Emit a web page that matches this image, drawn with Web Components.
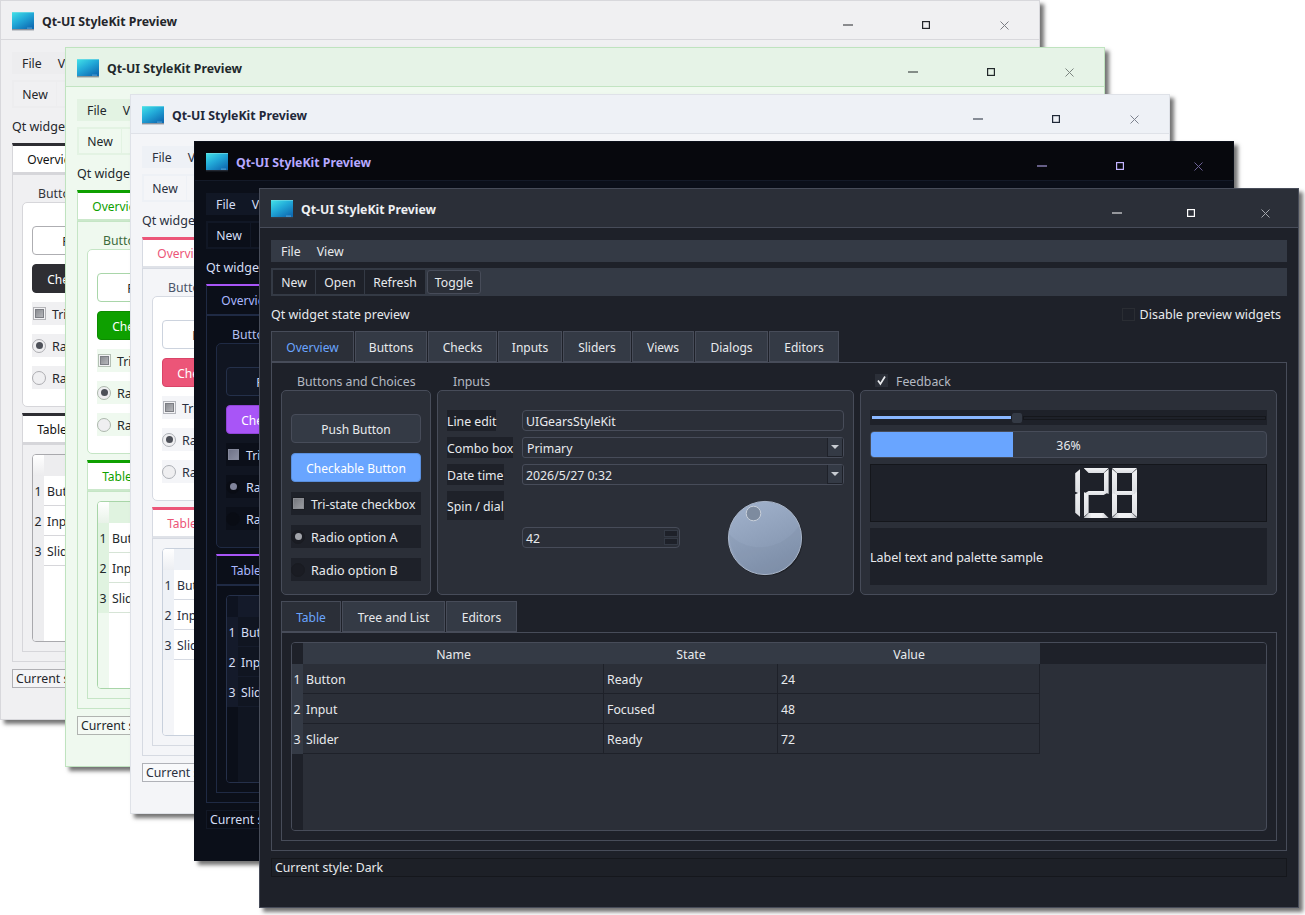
<!DOCTYPE html>
<html lang="en">
<head>
<meta charset="utf-8">
<title>Qt-UI StyleKit Preview</title>
<style>
  html, body { margin: 0; background: #fff; }
  body { font: 12.3px "Noto Sans", "Open Sans", sans-serif; overflow: hidden; }
</style>
</head>
<body>
<qt-desktop>
  <qt-window theme="light" style-name="Light" style="left:0;top:0"></qt-window>
  <qt-window theme="green" style-name="Green" style="left:65px;top:47px"></qt-window>
  <qt-window theme="rose" style-name="Rose" style="left:130px;top:94px"></qt-window>
  <qt-window theme="midnight" style-name="Midnight" style="left:194px;top:141px"></qt-window>
  <qt-window theme="dark" style-name="Dark" style="left:259px;top:188px"></qt-window>
</qt-desktop>

<script>
// small base class: css + markup go in an open shadow root
class QtWidget extends HTMLElement {
  constructor() {
    super();
    this.attachShadow({ mode: 'open' });
  }
  connectedCallback() {
    this.shadowRoot.innerHTML = `<style>:host,*{box-sizing:border-box} ${this.constructor.css}</style>${this.markup()}`;
  }
  markup() { return '<slot></slot>'; }
}

class QtDesktop extends QtWidget {
  static css = `:host{display:block;position:relative;width:1305px;height:915px;overflow:hidden}`;
}

class QtTitlebar extends QtWidget {
  static css = `
    :host{display:flex;align-items:center;flex:none;height:39px;background:var(--title);border-bottom:1px solid var(--title-line);padding:2px 0 0 11px}
    .logo{width:22px;height:20px;margin-right:8px;flex:none}
    .name{font-weight:700;font-size:12.3px;color:var(--title-text);flex:1;white-space:nowrap}
    .ctl{display:flex;gap:var(--ctl-gap);margin:7px var(--ctl-right) 0 0;align-self:flex-start}
    .ctl span{display:flex;width:70px;height:30px;align-items:center;justify-content:center}
    svg{display:block}`;
  markup() {
    const id = 'g' + Math.random().toString(36).slice(2, 7);
    return `
      <svg class="logo" viewBox="0 0 22 20">
        <defs><linearGradient id="${id}" x1="0" y1="0" x2="0.75" y2="1">
          <stop offset="0" stop-color="#43e3e8"/><stop offset=".5" stop-color="#22a9d8"/><stop offset="1" stop-color="#0f6db4"/>
        </linearGradient></defs>
        <rect x="0" y="1" width="22" height="17" fill="url(#${id})"/>
        <rect x="0" y="1" width="22" height="1" fill="#7fdfe6" opacity=".6"/>
        <rect x="0" y="18" width="22" height="1.4" fill="#3b4656" opacity=".55"/>
        <rect x="15" y="16.6" width="5" height="1" fill="#5aa6d8"/>
      </svg>
      <span class="name">Qt-UI StyleKit Preview</span>
      <span class="ctl">
        <span><svg width="10" height="2"><rect y=".5" width="10" height="1" fill="var(--ctl-icon)"/></svg></span>
        <span><svg width="8" height="8"><rect x=".6" y=".6" width="6.8" height="6.8" fill="none" stroke="var(--ctl-icon)" stroke-width="1.2"/></svg></span>
        <span><svg width="9" height="9"><path d="M.5 .5 8.5 8.5M8.5 .5 .5 8.5" fill="none" stroke="var(--ctl-close)" stroke-width="1"/></svg></span>
      </span>`;
  }
}

class QtMenubar extends QtWidget {
  static css = `
    :host{display:flex;flex:none;height:22px;align-items:center;background:var(--menu);padding-left:2px}
    ::slotted(span){padding:0 8px}`;
}

class QtToolbar extends QtWidget {
  static css = `:host{display:flex;flex:none;height:28px;margin-top:6px;gap:1px;padding:2px;background:var(--menu)}`;
}

class QtToolButton extends QtWidget {
  static css = `
    :host{display:flex;align-items:center;justify-content:center;background:var(--tool);font-size:12.2px;padding-top:1px}
    :host([checked]){background:var(--tool-on);border:1px solid var(--line);border-radius:3px;margin-left:1px}`;
}

class QtTabBar extends QtWidget {
  static css = `:host{display:flex;flex:none;height:31px;gap:1px}`;
}

class QtTab extends QtWidget {
  static css = `
    :host{display:flex;align-items:center;justify-content:center;background:var(--tab);border:1px solid var(--line);color:var(--text);font-size:12px;padding-top:1px}
    :host([selected]){background:var(--tab-sel);color:var(--tab-sel-text);border-top:var(--tab-top);border-bottom:var(--tab-bottom)}`;
}

class QtGroup extends QtWidget {
  static css = `
    :host{display:flex;flex-direction:column;min-width:0}
    .head{height:19px;flex:none;display:flex;align-items:center;padding:1px 0 0 16px;color:var(--muted);gap:8px}
    :host([checkable]) .head{padding-left:15px}
    .tick{width:13px;height:13px;background:var(--tick-bg);display:flex;align-items:center;justify-content:center;margin-top:-1px}
    .box{flex:1;background:var(--panel);border:1px solid var(--group-line);border-radius:5px;display:flex;flex-direction:column}`;
  markup() {
    const tick = this.hasAttribute('checkable')
      ? `<span class="tick"><svg width="11" height="11" viewBox="0 0 11 11"><path d="M2 5.5 4.4 9 9 1.5" fill="none" stroke="var(--text)" stroke-width="1.7"/></svg></span>` : '';
    return `<div class="head">${tick}<span>${this.getAttribute('label')}</span></div><div class="box"><slot></slot></div>`;
  }
}

class QtButton extends QtWidget {
  static css = `
    :host{display:flex;height:29px;align-items:center;justify-content:center;background:var(--btn);border:1px solid var(--btn-line);border-radius:4px;flex:none;font-size:12px;padding-top:1px}
    :host([checked]){background:var(--accent);border-color:var(--accent-line);color:var(--on-accent)}`;
}

class QtCheck extends QtWidget {
  static css = `
    :host{display:flex;height:23px;align-items:center;background:var(--label-bg);flex:none;padding-top:1px}
    .ind{width:13px;height:13px;border:1px solid var(--ind-line);background:var(--ind-bg);display:flex;align-items:center;justify-content:center;margin:-1px 6px 0 1px;flex:none}
    i{display:block;width:var(--tri-size);height:var(--tri-size);background:linear-gradient(135deg,var(--tri-a),var(--tri-b));border:1px solid var(--tri-c)}
    :host([plain]){background:none;height:auto;font-size:12.5px}
    :host([plain]) .ind{margin-right:5px;border-color:#2a2d33;background:none}`;
  markup() {
    return `<span class="ind">${this.hasAttribute('partial') ? '<i></i>' : ''}</span><slot></slot>`;
  }
}

class QtRadio extends QtWidget {
  static css = `
    :host{display:flex;height:23px;align-items:center;background:var(--label-bg);flex:none;font-size:12.6px;padding-top:1px}
    .ind{width:14px;height:14px;border-radius:50%;border:1px solid var(--radio-line);background:var(--radio-bg);display:flex;align-items:center;justify-content:center;margin:-1px 6px 0 0;flex:none}
    i{display:block;width:7px;height:7px;border-radius:50%;background:var(--radio-dot)}`;
  markup() {
    return `<span class="ind">${this.hasAttribute('checked') ? '<i></i>' : ''}</span><slot></slot>`;
  }
}

class QtLabel extends QtWidget {
  static css = `:host{display:flex;align-items:center;justify-self:start;align-self:start;height:21px;background:var(--label-bg);white-space:nowrap;padding-top:1px}
    :host([tall]){height:29px}`;
}

class QtField extends QtWidget {
  static css = `
    :host{display:flex;height:21px;align-items:center;border:1px solid var(--line);border-radius:4px;padding:1px 0 0 3px;white-space:nowrap;overflow:hidden}
    :host([kind=combo]){padding-left:4px;border-radius:3px}
    :host([kind=date]){border-radius:3px}
    .text{flex:1}
    .arrow{width:16px;height:19px;margin-top:-1px;background:var(--menu);border-left:1px solid var(--tool);border-bottom:1px solid var(--tool);border-right:1px solid var(--tool);display:flex;align-items:center;justify-content:center}
    .arrow b{border:4px solid transparent;border-top:4px solid var(--arrow);border-bottom:0;width:0;height:0}
    .spin{display:flex;flex-direction:column;gap:1px;margin:-1px 1px 0 0;width:14px}
    .spin b{display:block;height:7px;background:var(--tool);border:1px solid var(--menu)}`;
  markup() {
    const kind = this.getAttribute('kind');
    let tail = '';
    if (kind === 'combo' || kind === 'date') tail = `<span class="arrow"><b></b></span>`;
    if (kind === 'spin') tail = `<span class="spin"><b></b><b></b></span>`;
    return `<span class="text"><slot></slot></span>${tail}`;
  }
}

class QtDial extends QtWidget {
  static css = `:host{display:flex;align-items:center;justify-content:center} svg{display:block;overflow:visible}`;
  markup() {
    const id = 'd' + Math.random().toString(36).slice(2, 7);
    return `
      <svg width="76" height="76" viewBox="0 0 76 76">
        <defs>
          <linearGradient id="${id}" x1=".3" y1="0" x2=".7" y2="1">
            <stop offset="0" stop-color="var(--dial-a)"/><stop offset="1" stop-color="var(--dial-b)"/>
          </linearGradient>
        </defs>
        <circle cx="39" cy="39" r="37" fill="#000" opacity=".25"/>
        <circle cx="38" cy="38" r="36.6" fill="url(#${id})" stroke="var(--dial-edge)" stroke-width="1"/>
        <path d="M2 34C16 50 50 56 72 26 75 34 75 42 72 50 62 68 46 74 38 74 20 74 4 58 2 34Z" fill="#6c7c96" opacity=".12"/>
        <circle cx="26.5" cy="13.5" r="7.3" fill="var(--dial-notch)" stroke="var(--dial-ring)" stroke-width="1"/>
      </svg>`;
  }
}

class QtSlider extends QtWidget {
  static css = `
    :host{display:flex;height:15px;align-items:center;background:var(--label-bg);padding:0 1px 0 2px;flex:none}
    .fill{width:139px;height:3px;background:var(--slider-fill);flex:none}
    .knob{width:12px;height:12px;background:var(--menu);border:1px solid var(--tool);border-radius:3px;flex:none}
    .rest{flex:1;height:4px;background:var(--tool);border:1px solid #15171c}`;
  markup() { return `<span class="fill"></span><span class="knob"></span><span class="rest"></span>`; }
}

class QtProgress extends QtWidget {
  static css = `
    :host{display:block;position:relative;height:27px;background:var(--menu);border:1px solid var(--line);border-radius:4px;overflow:hidden;flex:none}
    .chunk{height:100%;width:36%;background:var(--accent)}
    .val{position:absolute;inset:1px 0 0;display:flex;align-items:center;justify-content:center}`;
  markup() { return `<div class="chunk"></div><div class="val"><slot></slot></div>`; }
}

// seven segment readout, like QLCDNumber. the value stays selectable text over the segments
class QtLcd extends QtWidget {
  static css = `
    :host{display:flex;height:58px;justify-content:flex-end;align-items:center;padding-right:129px;background:var(--label-bg);border:1px solid #14161b;flex:none}
    .readout{position:relative;display:flex;gap:3.4px}
    .digit{display:grid;width:25px;height:50px;grid-template-columns:5px 15px 5px;grid-template-rows:5px 18px 4px 18px 5px}
    .s{background:linear-gradient(180deg,#f1f2f4,#dcdee2)}
    .a{grid-area:1/1/2/4;clip-path:polygon(0 0,100% 0,80% 100%,20% 100%)}
    .d{grid-area:5/1/6/4;clip-path:polygon(20% 0,80% 0,100% 100%,0 100%);background:linear-gradient(90deg,#b9bcc2,#f1f2f4 30%,#f1f2f4 70%,#b9bcc2)}
    .g{grid-area:3/1/4/4;clip-path:polygon(6% 50%,20% 0,80% 0,94% 50%,80% 100%,20% 100%)}
    .f{grid-area:1/1/4/2;clip-path:polygon(0 4%,100% 19%,100% 88%,0 96%)}
    .b{grid-area:1/3/4/4;clip-path:polygon(0 19%,100% 4%,100% 96%,0 88%)}
    .e{grid-area:3/1/6/2;clip-path:polygon(0 4%,100% 12%,100% 81%,0 96%)}
    .c{grid-area:3/3/6/4;clip-path:polygon(0 12%,100% 4%,100% 96%,0 81%)}
    .val{position:absolute;inset:0;color:transparent;font-size:44px;line-height:50px;letter-spacing:3px;text-align:right}`;
  markup() {
    const map = { 0: 'abcdef', 1: 'bc', 2: 'abged', 3: 'abgcd', 4: 'fgbc', 5: 'afgcd', 6: 'afgcde', 7: 'abc', 8: 'abcdefg', 9: 'abcdfg' };
    const value = this.getAttribute('value');
    const digits = [...value].map(n =>
      `<div class="digit">${[...map[n]].map(s => `<span class="s ${s}"></span>`).join('')}</div>`).join('');
    return `<div class="readout">${digits}<span class="val">${value}</span></div>`;
  }
}

class QtTable extends QtWidget {
  static css = `
    :host{display:grid;flex:1;min-height:0;grid-template-columns:11px 301px 174px 262px 1fr;grid-template-rows:21px 30px 30px 30px 1fr;border:1px solid var(--table-line);border-radius:4px;background:var(--table);overflow:hidden}
    .corner{background:var(--corner)}
    .hd{background:var(--head);display:flex;align-items:center;justify-content:center;padding-top:1px}
    .hd-rest{background:var(--head-rest)}
    .num{background:var(--head);display:flex;align-items:center;justify-content:center;border-bottom:1px solid var(--head);padding:2px 1px 0 0}
    .cell{display:flex;align-items:center;padding:1px 0 0 3px;border-right:1px solid var(--grid);border-bottom:1px solid var(--grid)}
    .gutter{background:var(--gutter)}`;
  markup() {
    const rows = [['Button', 'Ready', '24'], ['Input', 'Focused', '48'], ['Slider', 'Ready', '72']];
    const body = rows.map((r, i) =>
      `<div class="num">${i + 1}</div>${r.map(c => `<div class="cell">${c}</div>`).join('')}<div></div>`).join('');
    return `<div class="corner"></div><div class="hd">Name</div><div class="hd">State</div><div class="hd">Value</div><div class="hd-rest"></div>
      ${body}<div class="gutter"></div>`;
  }
}

class QtWindow extends QtWidget {
  static css = `
    :host{position:absolute;display:flex;flex-direction:column;width:1040px;height:720px;background:var(--win);border:1px solid var(--win-line);color:var(--text);
      box-shadow:4px 4px 4px rgba(0,0,0,.55);font:12.3px "Noto Sans","Open Sans",sans-serif;white-space:nowrap;
      --ctl-gap:8px;--ctl-right:0px;--stack:9px;--foot:31px;--on-accent:#fff;--tab-bottom:1px solid var(--line);--tab-top:3px solid var(--accent);
      --tri-size:9px;--tri-a:#8b8d92;--tri-b:#b5b6ba;--tri-c:#7c7e84;--ind-bg:#f2f2f4;--radio-bg:#efeff1;--radio-dot:#4d5058;--arrow:#555;
      --dial-a:#dfe3ea;--dial-b:#b8bfcb;--dial-edge:#9aa3b0;--dial-notch:#aab2c0;--dial-ring:#eee;--slider-fill:var(--accent);--grid:var(--line);--tick-bg:none}
    :host([theme=dark]){--win:#1e2129;--win-line:#474c59;--title:#2b2f38;--title-line:#474c59;--title-text:#eef0f3;--ctl-icon:#fff;--ctl-close:#a4a7ad;--ctl-gap:4px;--ctl-right:-2px;
      --menu:#343a45;--tool:#1e2129;--tool-on:#2b2f38;--line:#474c59;--group-line:#474c59;--text:#e8eaed;--muted:#b4b9c2;--panel:#2b2f38;--label-bg:#1e2129;
      --accent:#69a5ff;--accent-line:#5a8fdd;--tab:#343a45;--tab-sel:#2b2f38;--tab-sel-text:#6aa5ff;--tab-top:1px solid #474c59;--btn:#343a45;--btn-line:#474c59;
      --stack:10px;--foot:30px;--tri-size:11px;--ind-line:#1a1c22;--ind-bg:#1e2129;--tri-a:#75777d;--tri-b:#9a9ca1;--tri-c:#8a8c92;--radio-line:#191b21;--radio-bg:#1a1c23;--radio-dot:#a2a4aa;--arrow:#c8ccd2;
      --dial-a:#9fb0ca;--dial-b:#7f90aa;--dial-edge:#a9b5c8;--dial-notch:#7d8b9f;--dial-ring:#c9d0da;--slider-fill:#8ab7ff;
      --table:#2b2f38;--table-line:#474c59;--head:#343a45;--head-rest:#1e2129;--corner:#1e2129;--gutter:#1e2129;--grid:#1e2129;--status:#1d2027;--status-line:#15171c;--tick-bg:#2b2f38}
    :host([theme=midnight]){--win:#0b0f19;--win-line:#0b0f19;--title:#07080d;--title-line:#141a28;--title-text:#b6a8ff;--ctl-icon:#c3b4ff;--ctl-close:#6d6296;
      --menu:#111725;--tool:#0b0f19;--tool-on:#111725;--line:#1f2a44;--group-line:#1f2a44;--text:#d5def5;--muted:#b5c0f0;--panel:#101521;--label-bg:#0b0f19;
      --accent:#a855f7;--accent-line:#8f44d8;--tab:#111725;--tab-sel:#0b0f19;--tab-sel-text:#aab8ff;--tab-top:2px solid #a855f7;--btn:#121826;--btn-line:#24304a;
      --tri-size:11px;--ind-line:#0b0f19;--ind-bg:#0b0f19;--tri-a:#6f7388;--tri-b:#8a8ea2;--tri-c:#85899c;--radio-line:#0a0d15;--radio-bg:#090c14;--radio-dot:#80849a;--arrow:#c8ccd2;
      --table:#101521;--table-line:#25304a;--head:#141a2a;--head-rest:#0b0f19;--corner:#0e1320;--gutter:#0b0f19;--grid:#151b2b;--status:#0a0d16;--status-line:#121826}
    :host([theme=light]){--win:#f0f0f2;--win-line:#d8d8dc;--title:#f0f0f2;--title-line:#d8d8dc;--title-text:#24262b;--ctl-icon:#24262b;--ctl-close:#7b7d83;
      --menu:#ededef;--tool:#f0f0f2;--tool-on:#fff;--line:#d6d6da;--group-line:#d6d6da;--text:#24262b;--muted:#33353a;--panel:#fff;--label-bg:#f0f0f2;
      --accent:#2e2e33;--accent-line:#2e2e33;--tab:#f0f0f2;--tab-sel:#fff;--tab-sel-text:#111;--btn:#fff;--btn-line:#aeaeb2;--tab-bottom:2px solid #d6d6da;
      --ind-line:#b4b4b8;--radio-line:#adadb1;
      --table:#fff;--table-line:#a9a9ad;--head:#ededef;--head-rest:#f0f0f2;--corner:linear-gradient(#fff,#ececee);--gutter:#ededef;--grid:#d6d6da;--status:#f4f4f6;--status-line:#b0b0b4}
    :host([theme=green]){--win:#eff9ef;--win-line:#bfe3bf;--title:#e6f3e7;--title-line:#c2e4c2;--title-text:#22282b;--ctl-icon:#22282b;--ctl-close:#7c8580;
      --menu:#e3f3e3;--tool:#eff9ef;--tool-on:#fff;--line:#c5e5c5;--group-line:#c5e5c5;--text:#22282b;--muted:#3d6b3d;--panel:#fff;--label-bg:#eff9ef;
      --accent:#0ea000;--accent-line:#0c8c00;--tab:#e3f3e3;--tab-sel:#fff;--tab-sel-text:#0ea000;--btn:#fff;--btn-line:#a9d6a9;--tab-bottom:2px solid #cbe8cb;
      --ind-line:#b4c0b4;--radio-line:#adb8ad;
      --table:#fff;--table-line:#a8d5a8;--head:#e0f3e0;--head-rest:#eff9ef;--corner:linear-gradient(#fff,#e8f2e8);--gutter:#eff9ef;--grid:#d6e4d6;--status:#f4faf4;--status-line:#b0b4b0}
    :host([theme=rose]){--win:#f4f5f8;--win-line:#dfe2e8;--title:#eef1f6;--title-line:#dfe2e8;--title-text:#22283a;--ctl-icon:#1f2937;--ctl-close:#7d828e;
      --menu:#eef1f6;--tool:#f4f5f8;--tool-on:#fff;--line:#d6dae2;--group-line:#d6dae2;--text:#2a3040;--muted:#4a5468;--panel:#fff;--label-bg:#f4f5f8;
      --accent:#ec5578;--accent-line:#d94468;--tab:#eef1f6;--tab-sel:#fff;--tab-sel-text:#ec5578;--btn:#fff;--btn-line:#ccd3de;--tab-bottom:2px solid #dfe2e8;
      --ind-line:#b4b6bc;--radio-line:#adb0b6;
      --table:#fff;--table-line:#c8d0dc;--head:#eef1f6;--head-rest:#f4f5f8;--corner:linear-gradient(#fff,#eceef2);--gutter:#f4f5f8;--grid:#d6dae2;--status:#f8f9fb;--status-line:#b0b2b8}
    .body{flex:1;min-height:0;display:flex;flex-direction:column;padding:12px 11px var(--foot) 11px}
    .intro{flex:none;height:35px;display:flex;align-items:center;justify-content:space-between;padding:1px 6px 0 0;font-size:12.5px}
    .tb-new{width:42px}.tb-open{width:48px}.tb-refresh{width:60px}.tb-toggle{width:54px}
    .pane{flex:1;min-height:0;display:flex;flex-direction:column;border:1px solid var(--line);padding:8px 9px 9px}
    .row{flex:none;display:grid;grid-template-columns:150px 417px 417px;gap:6px;height:224px}
    .stack{display:flex;flex-direction:column;gap:var(--stack);padding:23px 9px 0}
    .form{display:grid;grid-template-columns:69px 1fr;column-gap:6px;row-gap:6px;padding:19px 9px 0;grid-template-rows:21px 21px 21px 94px}
    .spin-row{display:grid;grid-template-columns:1fr 1fr;gap:6px;align-items:center}
    .spin-row qt-field{margin-top:-1px}
    .feed{display:flex;flex-direction:column;gap:6px;padding:19px 9px 0}
    .sample{display:flex;align-items:center;height:57px;background:var(--label-bg);font-size:12.5px;padding-top:1px}
    .w83{width:83px}.w72{width:72px}.w69{width:69px}.w64{width:64px}.w68{width:68px}.w62{width:62px}.w73{width:73px}.w70{width:70px}.w60{width:60px}.w103{width:103px}.w71{width:71px}
    .inner-tabs{margin-top:6px}
    .inner{flex:1;min-height:0;display:flex;flex-direction:column;border:1px solid var(--line);padding:9px}
    .status{flex:none;height:19px;margin-top:7px;display:flex;align-items:center;padding:0 0 1px 3px;background:var(--status);border:1px solid var(--status-line)}`;
  markup() {
    return `
      <qt-titlebar></qt-titlebar>
      <div class="body">
        <qt-menubar><span>File</span><span>View</span></qt-menubar>
        <qt-toolbar>
          <qt-toolbutton class="tb-new">New</qt-toolbutton><qt-toolbutton class="tb-open">Open</qt-toolbutton><qt-toolbutton class="tb-refresh">Refresh</qt-toolbutton><qt-toolbutton class="tb-toggle" checked>Toggle</qt-toolbutton>
        </qt-toolbar>
        <div class="intro"><span>Qt widget state preview</span><qt-check plain>Disable preview widgets</qt-check></div>
        <qt-tabbar>
          <qt-tab class="w83" selected>Overview</qt-tab><qt-tab class="w72">Buttons</qt-tab><qt-tab class="w69">Checks</qt-tab><qt-tab class="w64">Inputs</qt-tab><qt-tab class="w68">Sliders</qt-tab><qt-tab class="w62">Views</qt-tab><qt-tab class="w73">Dialogs</qt-tab><qt-tab class="w70">Editors</qt-tab>
        </qt-tabbar>
        <div class="pane">
          <div class="row">
            <qt-group label="Buttons and Choices">
              <div class="stack">
                <qt-button>Push Button</qt-button>
                <qt-button checked>Checkable Button</qt-button>
                <qt-check partial>Tri-state checkbox</qt-check>
                <qt-radio checked>Radio option A</qt-radio>
                <qt-radio>Radio option B</qt-radio>
              </div>
            </qt-group>
            <qt-group label="Inputs">
              <div class="form">
                <qt-label>Line edit</qt-label><qt-field>UIGearsStyleKit</qt-field>
                <qt-label>Combo box</qt-label><qt-field kind="combo">Primary</qt-field>
                <qt-label>Date time</qt-label><qt-field kind="date">2026/5/27 0:32</qt-field>
                <qt-label tall>Spin / dial</qt-label>
                <div class="spin-row"><qt-field kind="spin">42</qt-field><qt-dial></qt-dial></div>
              </div>
            </qt-group>
            <qt-group label="Feedback" checkable>
              <div class="feed">
                <qt-slider></qt-slider>
                <qt-progress>36%</qt-progress>
                <qt-lcd value="128"></qt-lcd>
                <div class="sample">Label text and palette sample</div>
              </div>
            </qt-group>
          </div>
          <qt-tabbar class="inner-tabs"><qt-tab class="w60" selected>Table</qt-tab><qt-tab class="w103">Tree and List</qt-tab><qt-tab class="w71">Editors</qt-tab></qt-tabbar>
          <div class="inner"><qt-table></qt-table></div>
        </div>
        <div class="status">Current style: ${this.getAttribute('style-name')}</div>
      </div>`;
  }
}

customElements.define('qt-desktop', QtDesktop);
customElements.define('qt-titlebar', QtTitlebar);
customElements.define('qt-menubar', QtMenubar);
customElements.define('qt-toolbar', QtToolbar);
customElements.define('qt-toolbutton', QtToolButton);
customElements.define('qt-tabbar', QtTabBar);
customElements.define('qt-tab', QtTab);
customElements.define('qt-group', QtGroup);
customElements.define('qt-button', QtButton);
customElements.define('qt-check', QtCheck);
customElements.define('qt-radio', QtRadio);
customElements.define('qt-label', QtLabel);
customElements.define('qt-field', QtField);
customElements.define('qt-dial', QtDial);
customElements.define('qt-slider', QtSlider);
customElements.define('qt-progress', QtProgress);
customElements.define('qt-lcd', QtLcd);
customElements.define('qt-table', QtTable);
customElements.define('qt-window', QtWindow);
</script>
</body>
</html>
